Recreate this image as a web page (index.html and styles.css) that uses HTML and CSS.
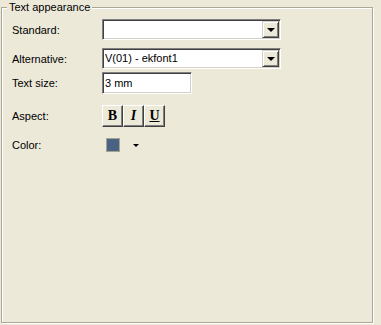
FILE: index.html
```html
<!DOCTYPE html>
<html lang="en">
<head>
    <meta charset="UTF-8">
    <title>Text appearance</title>
    <link rel="stylesheet" href="styles.css">
</head>
<body>
<fieldset class="group">
    <legend>Text appearance</legend>
    <div class="form">
        <div class="row row-std">
            <label class="lbl">Standard:</label>
            <div class="combo">
                <span class="combo-text"></span>
                <span class="drop"><span class="arrow"></span></span>
            </div>
        </div>
        <div class="row row-alt">
            <label class="lbl">Alternative:</label>
            <div class="combo">
                <span class="combo-text">V(01) - ekfont1</span>
                <span class="drop"><span class="arrow"></span></span>
            </div>
        </div>
        <div class="row row-size">
            <label class="lbl">Text size:</label>
            <div class="edit">3 mm</div>
        </div>
        <div class="row row-aspect">
            <label class="lbl">Aspect:</label>
            <div class="btns">
                <button class="tbtn bold">B</button>
                <button class="tbtn italic">I</button>
                <button class="tbtn under">U</button>
            </div>
        </div>
        <div class="row row-color">
            <label class="lbl">Color:</label>
            <div class="color-pick">
                <span class="swatch"></span>
                <span class="mini-arrow"></span>
            </div>
        </div>
    </div>
</fieldset>
</body>
</html>
```

FILE: styles.css
```css
html, body {
    margin: 0;
    padding: 0;
}

body {
    width: 381px;
    height: 325px;
    background: #ECE9D8;
    font-family: "Liberation Sans", Arial, sans-serif;
    font-size: 11px;
    color: #000;
    overflow: hidden;
}

.group {
    box-sizing: border-box;
    width: 372px;
    height: 323px;
    margin: 0 0 0 1px;
    padding: 0;
    border: 1px solid #ACA899;
    box-shadow: inset 1px 1px 0 #fff, 1px 1px 0 #fff;
}

.group legend {
    margin-left: 5px;
    padding: 0 2px;
    line-height: 15px;
    background: #ECE9D8;
}

.form {
    padding-left: 10px;
}

.row {
    display: flex;
    align-items: center;
}

.row-std {
    margin-top: 4px;
}

.row-alt {
    margin-top: 8px;
}

.row-size {
    margin-top: 3px;
}

.row-aspect {
    margin-top: 11px;
}

.row-color {
    margin-top: 11px;
}

.lbl {
    width: 90px;
    flex: none;
}

.combo {
    box-sizing: border-box;
    width: 179px;
    height: 21px;
    display: flex;
    align-items: center;
    background: #fff;
    border: 1px solid;
    border-color: #808080 #fff #fff #808080;
    box-shadow: inset 1px 1px 0 #404040, inset -1px -1px 0 #D4D0C8;
    padding: 1px 1px 1px 2px;
}

.combo-text {
    flex: 1;
    line-height: 15px;
}

.drop {
    box-sizing: border-box;
    width: 17px;
    height: 17px;
    display: flex;
    align-items: center;
    justify-content: center;
    background: #ECE9D8;
    border: 1px solid;
    border-color: #D4D0C8 #404040 #404040 #D4D0C8;
    box-shadow: inset 1px 1px 0 #fff, inset -1px -1px 0 #808080;
}

.arrow {
    width: 0;
    height: 0;
    border-left: 4px solid transparent;
    border-right: 4px solid transparent;
    border-top: 4px solid #000;
    margin-top: 1px;
}

.edit {
    box-sizing: border-box;
    width: 90px;
    height: 22px;
    line-height: 16px;
    background: #fff;
    border: 1px solid;
    border-color: #808080 #fff #fff #808080;
    box-shadow: inset 1px 1px 0 #404040, inset -1px -1px 0 #D4D0C8;
    padding: 2px 2px 0 2px;
}

.btns {
    display: flex;
}

.tbtn {
    box-sizing: border-box;
    width: 21px;
    height: 22px;
    margin: 0;
    padding: 0;
    font-family: "Liberation Serif", "Times New Roman", serif;
    font-size: 14px;
    font-weight: bold;
    color: #000;
    background: #ECE9D8;
    border: 1px solid;
    border-color: #fff #404040 #404040 #fff;
    box-shadow: inset -1px -1px 0 #808080;
}

.tbtn.italic {
    font-style: italic;
}

.tbtn.under {
    text-decoration: underline;
}

.color-pick {
    display: flex;
    align-items: center;
    margin-left: 4px;
}

.swatch {
    box-sizing: border-box;
    width: 14px;
    height: 14px;
    background: #4A6384;
    border: 1px solid #A8A493;
}

.mini-arrow {
    width: 0;
    height: 0;
    margin-left: 13px;
    border-left: 3px solid transparent;
    border-right: 3px solid transparent;
    border-top: 3px solid #000;
}
```
